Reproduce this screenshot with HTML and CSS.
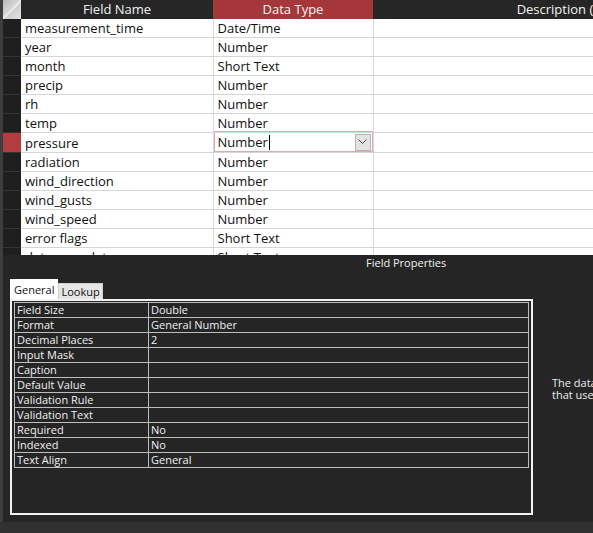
FILE: index.html
```html
<!DOCTYPE html>
<html lang="en">
<head>
    <meta charset="UTF-8">
    <title>Table Design</title>
    <link rel="stylesheet" href="styles.css">
</head>
<body>

<div class="window">
    <div class="main">
        <!-- Felső rész: mezők listája -->
        <div class="design-pane">
            <table class="design-grid">
                <colgroup>
                    <col class="col-sel">
                    <col class="col-name">
                    <col class="col-type">
                    <col class="col-desc">
                </colgroup>
                <thead>
                    <tr>
                        <th class="corner"></th>
                        <th>Field Name</th>
                        <th class="active-col">Data Type</th>
                        <th>Description (Optional)</th>
                    </tr>
                </thead>
                <tbody>
                    <tr><td class="sel"></td><td>measurement_time</td><td>Date/Time</td><td></td></tr>
                    <tr><td class="sel"></td><td>year</td><td>Number</td><td></td></tr>
                    <tr><td class="sel"></td><td>month</td><td>Short Text</td><td></td></tr>
                    <tr><td class="sel"></td><td>precip</td><td>Number</td><td></td></tr>
                    <tr><td class="sel"></td><td>rh</td><td>Number</td><td></td></tr>
                    <tr><td class="sel"></td><td>temp</td><td>Number</td><td></td></tr>
                    <tr class="current">
                        <td class="sel"></td>
                        <td>pressure</td>
                        <td class="editing">
                            <div class="combo">
                                <span class="combo-text">Number<span class="caret"></span></span>
                                <span class="combo-btn">
                                    <svg width="9" height="6" viewBox="0 0 9 6"><polyline points="0.5,0.5 4.5,4.5 8.5,0.5" fill="none" stroke="#444" stroke-width="1"/></svg>
                                </span>
                            </div>
                        </td>
                        <td></td>
                    </tr>
                    <tr><td class="sel"></td><td>radiation</td><td>Number</td><td></td></tr>
                    <tr><td class="sel"></td><td>wind_direction</td><td>Number</td><td></td></tr>
                    <tr><td class="sel"></td><td>wind_gusts</td><td>Number</td><td></td></tr>
                    <tr><td class="sel"></td><td>wind_speed</td><td>Number</td><td></td></tr>
                    <tr><td class="sel"></td><td>error flags</td><td>Short Text</td><td></td></tr>
                    <tr><td class="sel"></td><td>data_complete</td><td>Short Text</td><td></td></tr>
                </tbody>
            </table>
        </div>

        <!-- Alsó rész: mező tulajdonságai -->
        <div class="props-pane">
            <div class="props-title">Field Properties</div>
            <div class="props-body">
                <div class="props-left">
                    <div class="tabs">
                        <span class="tab tab-active">General</span>
                        <span class="tab">Lookup</span>
                    </div>
                    <div class="props-box">
                        <table class="props-grid">
                            <tr><td>Field Size</td><td>Double</td></tr>
                            <tr><td>Format</td><td>General Number</td></tr>
                            <tr><td>Decimal Places</td><td>2</td></tr>
                            <tr><td>Input Mask</td><td></td></tr>
                            <tr><td>Caption</td><td></td></tr>
                            <tr><td>Default Value</td><td></td></tr>
                            <tr><td>Validation Rule</td><td></td></tr>
                            <tr><td>Validation Text</td><td></td></tr>
                            <tr><td>Required</td><td>No</td></tr>
                            <tr><td>Indexed</td><td>No</td></tr>
                            <tr><td>Text Align</td><td>General</td></tr>
                        </table>
                    </div>
                </div>
                <div class="help">
                    <div class="help-line">The data type determines the kind of values</div>
                    <div class="help-line">that users can store in the field. Press F1 for</div>
                </div>
            </div>
        </div>
    </div>
    <div class="statusbar"></div>
</div>

</body>
</html>
```

FILE: styles.css
```css
/* Alap stílusok */
body {
    margin: 0;
    padding: 0;
    background-color: #252525;
    font-family: "Open Sans", "Noto Sans", sans-serif;
    overflow: hidden;
}

.window {
    width: 593px;
    height: 533px;
    display: flex;
    flex-direction: column;
    overflow: hidden;
}

.main {
    flex: 1;
    display: flex;
    flex-direction: column;
    border-left: 3px solid #3e3e3e;
    min-height: 0;
}

/* Design grid */
.design-pane {
    height: 255px;
    overflow: hidden;
    flex-shrink: 0;
}

.design-grid {
    border-collapse: collapse;
    table-layout: fixed;
    width: 790px;
    font-size: 13px;
}

.col-sel { width: 18px; }
.col-name { width: 192px; }
.col-type { width: 160px; }
.col-desc { width: 420px; }

.design-grid th {
    height: 19px;
    padding: 0;
    background-color: #262626;
    color: #f2f2f2;
    font-weight: normal;
    text-align: center;
    white-space: nowrap;
    line-height: 19px;
}

.design-grid th.corner {
    background: linear-gradient(135deg, #b8b8b8 0%, #d6d6d6 45%, #f4f4f4 50%, #d0d0d0 56%, #e4e4e4 100%);
}

.design-grid th.active-col {
    background-color: #a5373b;
}

.design-grid td {
    height: 18px;
    padding: 0 0 0 4px;
    background-color: #fff;
    color: #111;
    border-bottom: 1px solid #d6d6d6;
    border-right: 1px solid #d3d9e6;
    line-height: 18px;
    white-space: nowrap;
    overflow: hidden;
}

.design-grid td.sel {
    padding: 0;
    background-color: #1f1f1f;
    border-bottom: 1px solid #343434;
    border-right: none;
}

.design-grid tr.current td.sel {
    background-color: #b33c3e;
}

.design-grid td.editing {
    padding: 0;
    overflow: visible;
}

.combo {
    display: flex;
    align-items: center;
    justify-content: space-between;
    height: 18px;
    margin: -2px -1px -1px -1px;
    border: 2px solid #eaa6ae;
    padding-left: 3px;
    background-color: #fff;
}

.combo-text {
    display: flex;
    align-items: center;
}

.caret {
    display: inline-block;
    width: 1px;
    height: 15px;
    background-color: #000;
    margin-left: 1px;
}

.combo-btn {
    display: flex;
    align-items: center;
    justify-content: center;
    width: 14px;
    height: 15px;
    background-color: #e3e3e3;
    border: 1px solid #b4b4b4;
    margin-right: 1px;
}

/* Field properties */
.props-pane {
    flex: 1;
    display: flex;
    flex-direction: column;
    font-size: 11px;
    color: #f0f0f0;
}

.props-title {
    height: 16px;
    line-height: 16px;
    padding-left: 363px;
}

.props-body {
    display: flex;
    margin-top: 8px;
}

.props-left {
    margin-left: 7px;
    width: 523px;
    flex-shrink: 0;
}

.tabs {
    display: flex;
    align-items: flex-end;
    height: 20px;
}

.tab {
    display: inline-block;
    height: 15px;
    line-height: 15px;
    padding: 0 2px;
    background-color: #e6e6e6;
    color: #111;
    font-size: 11px;
    border: 1px solid #cfcfcf;
    border-bottom: none;
}

.tab-active {
    height: 19px;
    line-height: 19px;
    padding: 0 3px;
    background-color: #fff;
    border-color: #fff;
}

.props-box {
    height: 210px;
    border: 2px solid #f2f2f2;
    padding: 1px 2px;
    background-color: #252525;
}

.props-grid {
    width: 515px;
    border-collapse: collapse;
    table-layout: fixed;
}

.props-grid td {
    height: 14px;
    padding: 0 0 0 2px;
    border: 1px solid #bdbdbd;
    line-height: 14px;
    white-space: nowrap;
}

.props-grid td:first-child {
    width: 131px;
}

.help {
    margin-left: 19px;
    margin-top: 98px;
    white-space: nowrap;
    font-size: 11px;
    color: #ececec;
}

.help-line {
    height: 12px;
    line-height: 12px;
}

.statusbar {
    height: 11px;
    background-color: #313131;
    flex-shrink: 0;
}
```
